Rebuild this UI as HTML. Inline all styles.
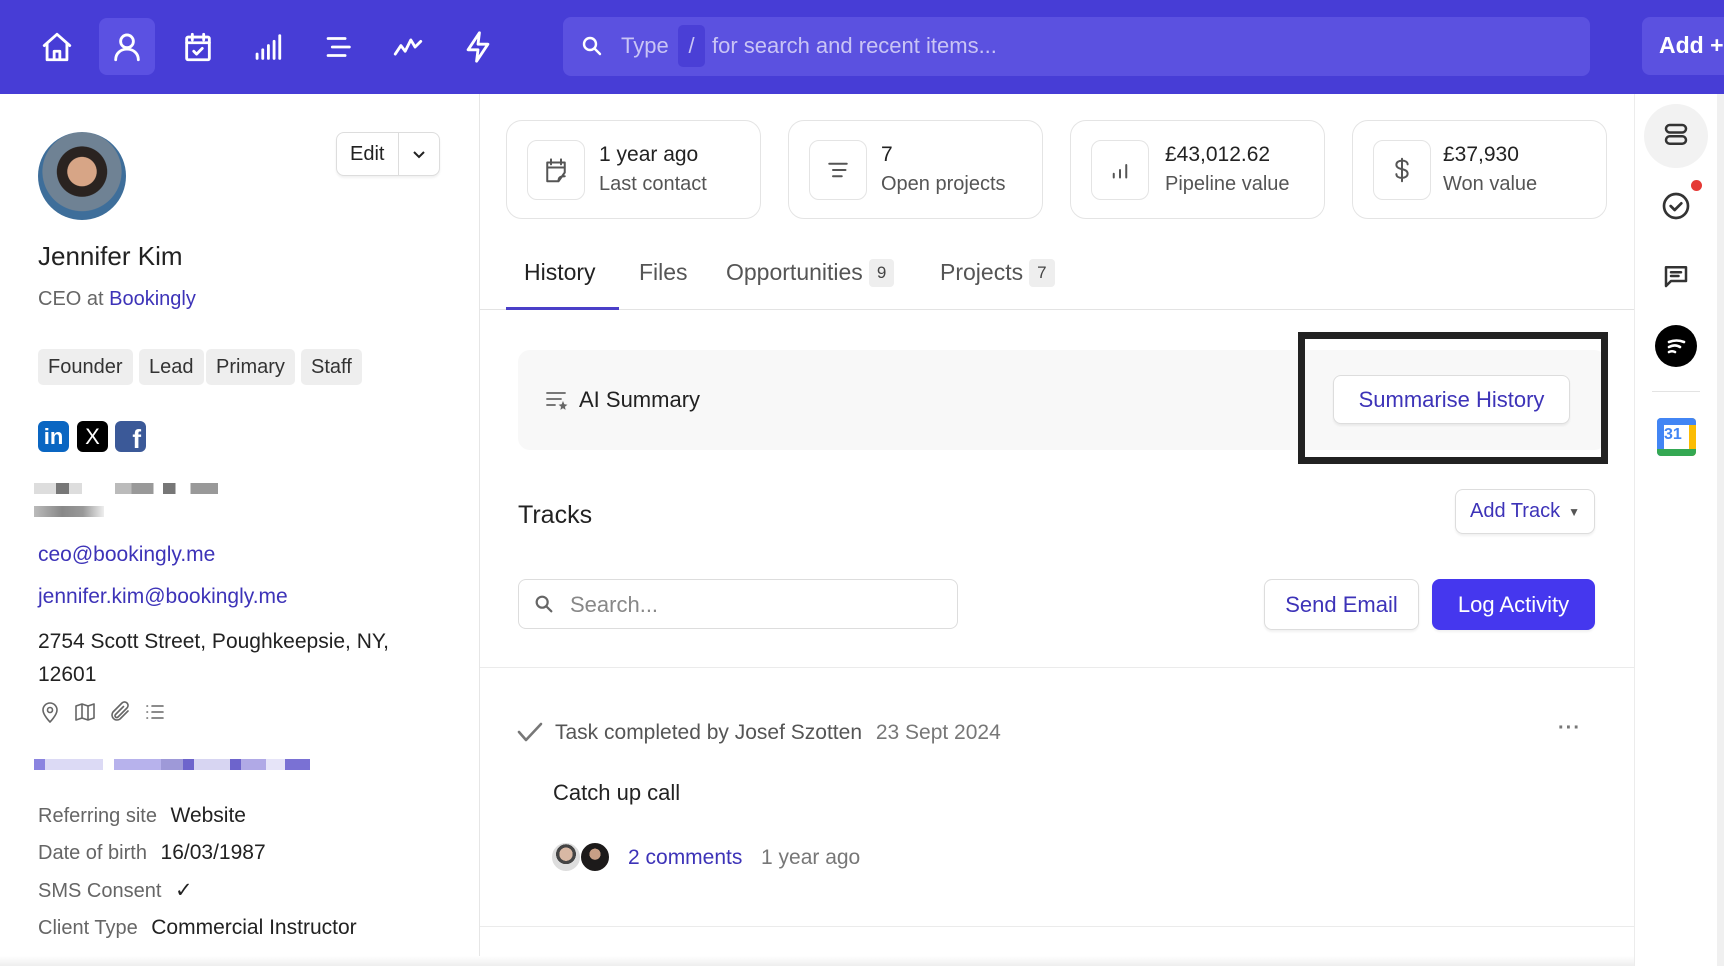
<!DOCTYPE html>
<html><head><meta charset="utf-8"><style>
*{box-sizing:border-box;margin:0;padding:0}
body{width:1724px;height:966px;overflow:hidden;background:#fff;font-family:"Liberation Sans",Arial,sans-serif;color:#222;position:relative}
.a{position:absolute}
.top{left:0;top:0;width:1724px;height:94px;background:#473dd6}
.nav{top:18px;width:56px;height:57px;display:flex;align-items:center;justify-content:center;border-radius:8px}
.nav svg{width:34px;height:34px;fill:none;stroke:#fff;stroke-width:2;stroke-linecap:round;stroke-linejoin:round}
.t{white-space:nowrap}
.tag{top:349px;height:36px;background:#eee;border-radius:5px;font-size:20px;line-height:36px;padding:0 10px;color:#333}
.card{top:120px;width:255px;height:99px;border:1px solid #e4e4e4;border-radius:16px}
.ib{left:20px;top:19px;width:58px;height:60px;border:1px solid #e4e4e4;border-radius:10px;display:flex;align-items:center;justify-content:center}
.ib svg{width:30px;height:30px;fill:none;stroke:#555;stroke-width:1.6;stroke-linecap:round;stroke-linejoin:round}
.v{left:92px;top:22px;font-size:21px;color:#222}
.l{left:92px;top:52px;font-size:20px;color:#555}
.tab{top:259px;font-size:23px;color:#555}
.badge{display:inline-block;background:#eee;border-radius:4px;font-size:17px;padding:4px 8px;margin-left:6px;vertical-align:2px;color:#444}
.btn{border:1px solid #ddd;border-radius:8px;background:#fff;box-shadow:0 2px 2px rgba(0,0,0,.06);display:flex;align-items:center;justify-content:center;color:#3d33b8}
.lbl{font-size:20px;color:#666;left:38px}
.lbl b{font-weight:normal;color:#222;margin-left:8px;font-size:21px}
svg.si,.si svg{fill:none;stroke:#333;stroke-width:2;stroke-linecap:round;stroke-linejoin:round}
</style></head><body>
<div class="a top"></div>
<div class="a nav" style="left:29px"><svg viewBox="0 0 24 24"><path d="M3 11 12 3l9 8M5 9.5V21h14V9.5M10 21v-6h4v6"/></svg></div>
<div class="a nav" style="left:99px;background:#5b51e2"><svg viewBox="0 0 24 24"><circle cx="12" cy="8" r="4.5"/><path d="M4 21c0-4.5 3.5-7.5 8-7.5s8 3 8 7.5"/></svg></div>
<div class="a nav" style="left:170px"><svg viewBox="0 0 24 24"><rect x="4" y="5" width="16" height="16" rx="1"/><path d="M4 9h16M8 3v4M16 3v4M9 15l2 2 4-4"/></svg></div>
<div class="a nav" style="left:239px"><svg viewBox="0 0 24 24"><path d="M5 20v-3M9 20v-6M13 20v-9M17 20V8M21 20V4"/></svg></div>
<div class="a nav" style="left:310px"><svg viewBox="0 0 24 24"><path d="M5 6h12M8 12h12M5 18h12"/></svg></div>
<div class="a nav" style="left:380px"><svg viewBox="0 0 24 24"><path d="M3 17l4-6 3 4 4-8 3 5 4-4"/></svg></div>
<div class="a nav" style="left:450px"><svg viewBox="0 0 24 24"><path d="M13 2 5 14h7l-1 8 8-12h-7z"/></svg></div>
<div class="a" style="left:563px;top:17px;width:1027px;height:59px;background:#5b51e0;border-radius:8px"></div>
<svg class="a" style="left:580px;top:34px" width="24" height="24" viewBox="0 0 24 24" fill="none" stroke="#fff" stroke-width="2.4" stroke-linecap="round"><circle cx="10" cy="10" r="6"/><path d="M15 15l5 5"/></svg>
<div class="a t" style="left:621px;top:33px;font-size:22px;color:#c9c4f5">Type</div>
<div class="a" style="left:678px;top:25px;width:27px;height:42px;background:#4a3fd6;border-radius:5px;color:#c9c4f5;font-size:22px;text-align:center;line-height:42px">/</div>
<div class="a t" style="left:712px;top:33px;font-size:22px;color:#c9c4f5">for search and recent items...</div>
<div class="a" style="left:1642px;top:17px;width:100px;height:58px;background:#5b51e0;border-radius:8px"></div>
<div class="a t" style="left:1659px;top:32px;font-size:23px;color:#fff;font-weight:bold">Add +</div>

<!-- left panel -->
<div class="a" style="left:479px;top:94px;width:1px;height:872px;background:#e6e6e6"></div>
<div class="a" style="left:38px;top:132px;width:88px;height:88px;border-radius:50%;background:radial-gradient(circle at 50% 45%,#d7a586 0 22%,#2a2320 23% 38%,#6f8294 39% 60%,#3e6e9a 61%)"></div>
<div class="a btn" style="left:336px;top:132px;width:104px;height:44px;color:#222;font-size:20px;justify-content:flex-start"><span style="padding-left:13px;width:62px;border-right:1px solid #ddd;line-height:44px">Edit</span><svg style="margin-left:12px" width="16" height="16" viewBox="0 0 16 16" fill="none" stroke="#222" stroke-width="2"><path d="M3 6l5 5 5-5"/></svg></div>
<div class="a t" style="left:38px;top:241px;font-size:26px">Jennifer Kim</div>
<div class="a t" style="left:38px;top:288px;font-size:20px;color:#666">CEO at <span style="color:#3d33b8">Bookingly</span></div>
<div class="a tag" style="left:38px">Founder</div>
<div class="a tag" style="left:139px">Lead</div>
<div class="a tag" style="left:206px">Primary</div>
<div class="a tag" style="left:301px">Staff</div>
<div class="a" style="left:38px;top:421px;width:31px;height:31px;background:#0a66c2;border-radius:6px;color:#fff;font-weight:bold;font-size:22px;line-height:31px;text-align:center">in</div>
<div class="a" style="left:77px;top:421px;width:31px;height:31px;background:#000;border-radius:6px;color:#fff;font-size:22px;line-height:31px;text-align:center">X</div>
<div class="a" style="left:115px;top:421px;width:31px;height:31px;background:#3b5998;border-radius:6px;color:#fff;font-weight:bold;font-size:26px;line-height:36px;text-align:right;padding-right:5px;overflow:hidden">f</div>
<div class="a" style="left:34px;top:483px;width:184px;height:11px;background:linear-gradient(90deg,#ddd 0 12%,#777 12% 19%,#ddd 19% 26%,#fff 26% 44%,#bbb 44% 53%,#999 53% 65%,#fff 65% 70%,#777 70% 77%,#fff 77% 85%,#999 85%)"></div>
<div class="a" style="left:34px;top:506px;width:70px;height:11px;background:linear-gradient(90deg,#bbb,#888 40%,#999 70%,#eee)"></div>
<div class="a t" style="left:38px;top:543px;font-size:21px;color:#3d33b8">ceo@bookingly.me</div>
<div class="a t" style="left:38px;top:585px;font-size:21px;color:#3d33b8">jennifer.kim@bookingly.me</div>
<div class="a" style="left:38px;top:625px;font-size:21px;line-height:33px;width:395px">2754 Scott Street, Poughkeepsie, NY, 12601</div>
<div class="a si" style="left:38px;top:700px;display:flex;gap:11px">
<svg width="24" height="24" viewBox="0 0 24 24" style="stroke:#666;stroke-width:1.6"><path d="M12 22s7-7 7-12a7 7 0 0 0-14 0c0 5 7 12 7 12z"/><circle cx="12" cy="10" r="2.5"/></svg>
<svg width="24" height="24" viewBox="0 0 24 24" style="stroke:#666;stroke-width:1.6"><path d="M3 6l6-2 6 2 6-2v14l-6 2-6-2-6 2zM9 4v14M15 6v14"/></svg>
<svg width="24" height="24" viewBox="0 0 24 24" style="stroke:#666;stroke-width:1.6"><path d="M20 11l-8 8a5 5 0 0 1-7-7l9-9a3.3 3.3 0 0 1 5 5l-9 9a1.7 1.7 0 0 1-2.5-2.5l8-8"/></svg>
<svg width="24" height="24" viewBox="0 0 24 24" style="stroke:#666;stroke-width:1.6"><path d="M9 6h11M9 12h11M9 18h11M4 6h.5M4 12h.5M4 18h.5"/></svg>
</div>
<div class="a" style="left:34px;top:759px;width:276px;height:11px;background:linear-gradient(90deg,#8b84e0 0 4%,#dcdaf5 4% 25%,#fff 25% 29%,#b7b2ec 29% 46%,#9e99d8 46% 54%,#6d64cc 54% 58%,#d7d5f2 58% 71%,#6d64cc 71% 75%,#b0a9e6 75% 84%,#e6e4f8 84% 91%,#7a71d4 91%)"></div>
<div class="a t lbl" style="top:804px">Referring site <b>Website</b></div>
<div class="a t lbl" style="top:841px">Date of birth <b>16/03/1987</b></div>
<div class="a t lbl" style="top:878px">SMS Consent <b>✓</b></div>
<div class="a t lbl" style="top:916px">Client Type <b>Commercial Instructor</b></div>

<!-- stat cards -->
<div class="a card" style="left:506px"><div class="a ib"><svg viewBox="0 0 24 24"><path d="M19 14V6H5v15h9zM5 10h14M8 3.5v4M16 3.5v4M14 21c0-3 1-4 5-4"/></svg></div><div class="a v t">1 year ago</div><div class="a l t">Last contact</div></div>
<div class="a card" style="left:788px"><div class="a ib"><svg viewBox="0 0 24 24"><path d="M5 7h14M8 12h10M8 17h7"/></svg></div><div class="a v t">7</div><div class="a l t">Open projects</div></div>
<div class="a card" style="left:1070px"><div class="a ib"><svg viewBox="0 0 24 24"><path d="M7 18v-3M12 18v-6M17 18V8"/></svg></div><div class="a v t" style="left:94px">£43,012.62</div><div class="a l t" style="left:94px">Pipeline value</div></div>
<div class="a card" style="left:1352px"><div class="a ib"><svg viewBox="0 0 24 24"><path d="M12 3v18M16.5 7.5c0-2-2-3-4.5-3s-4.5 1.2-4.5 3.3 2 3 4.5 3.5 4.5 1.5 4.5 3.6-2 3.4-4.5 3.4-4.5-1-4.5-3"/></svg></div><div class="a v t" style="left:90px">£37,930</div><div class="a l t" style="left:90px">Won value</div></div>

<!-- tabs -->
<div class="a tab t" style="left:524px;color:#222">History</div>
<div class="a tab t" style="left:639px">Files</div>
<div class="a tab t" style="left:726px">Opportunities<span class="badge">9</span></div>
<div class="a tab t" style="left:940px">Projects<span class="badge">7</span></div>
<div class="a" style="left:480px;top:309px;width:1154px;height:1px;background:#e3e3e3"></div>
<div class="a" style="left:506px;top:307px;width:113px;height:3px;background:#4a3fc8"></div>

<!-- AI summary -->
<div class="a" style="left:518px;top:350px;width:1088px;height:100px;background:#f8f8f8;border-radius:12px"></div>
<svg class="a" style="left:545px;top:390px" width="24" height="20" viewBox="0 0 24 20" fill="none" stroke="#666" stroke-width="1.8" stroke-linecap="round"><path d="M2 3h18M2 9h14M2 15h8"/><path d="M18 12l1 2.5 2.5.5-2 1.5.5 2.5-2-1.3-2 1.3.5-2.5-2-1.5 2.5-.5z" fill="#666" stroke-width="0.8"/></svg>
<div class="a t" style="left:579px;top:387px;font-size:22px;color:#222">AI Summary</div>
<div class="a" style="left:1298px;top:332px;width:310px;height:132px;border:7px solid #222"></div>
<div class="a btn t" style="left:1333px;top:375px;width:237px;height:49px;font-size:22px">Summarise History</div>

<!-- tracks -->
<div class="a t" style="left:518px;top:501px;font-size:25px">Tracks</div>
<div class="a btn t" style="left:1455px;top:489px;width:140px;height:45px;font-size:20px">Add Track <span style="color:#555;font-size:12px;margin-left:8px">▼</span></div>
<div class="a" style="left:518px;top:579px;width:440px;height:50px;border:1px solid #ddd;border-radius:8px"></div>
<svg class="a" style="left:533px;top:593px" width="22" height="22" viewBox="0 0 24 24" fill="none" stroke="#666" stroke-width="2.4" stroke-linecap="round"><circle cx="10" cy="10" r="6"/><path d="M15 15l5 5"/></svg>
<div class="a t" style="left:570px;top:592px;font-size:22px;color:#888">Search...</div>
<div class="a btn t" style="left:1264px;top:579px;width:155px;height:51px;font-size:22px">Send Email</div>
<div class="a btn t" style="left:1432px;top:579px;width:163px;height:51px;font-size:22px;background:#4537ee;border-color:#4537ee;color:#fff">Log Activity</div>
<div class="a" style="left:480px;top:667px;width:1154px;height:1px;background:#ebebeb"></div>
<svg class="a" style="left:517px;top:721px" width="26" height="22" viewBox="0 0 26 22" fill="none" stroke="#777" stroke-width="2.6" stroke-linecap="round" stroke-linejoin="round"><path d="M2 11l7 8L24 3"/></svg>
<div class="a t" style="left:555px;top:721px;font-size:21px;color:#555">Task completed by Josef Szotten <span style="margin-left:8px;color:#777">23 Sept 2024</span></div>
<div class="a t" style="left:1558px;top:717px;font-size:20px;color:#777;letter-spacing:1px;font-weight:bold">···</div>
<div class="a t" style="left:553px;top:780px;font-size:22px">Catch up call</div>
<div class="a" style="left:551px;top:842px;width:30px;height:30px;border-radius:50%;background:radial-gradient(circle at 50% 40%,#d8b8a4 0 30%,#444 31% 45%,#ddd 46%);border:1px solid #fff"></div>
<div class="a" style="left:580px;top:842px;width:30px;height:30px;border-radius:50%;background:radial-gradient(circle at 50% 40%,#c89f86 0 25%,#1c1a1a 26%);border:1px solid #fff"></div>
<div class="a t" style="left:628px;top:846px;font-size:21px;color:#3d33b8">2 comments</div>
<div class="a t" style="left:761px;top:846px;font-size:21px;color:#777">1 year ago</div>
<div class="a" style="left:480px;top:926px;width:1154px;height:1px;background:#ebebeb"></div>
<div class="a" style="left:0;top:956px;width:1634px;height:10px;background:linear-gradient(#fff,#eee)"></div>

<!-- right sidebar -->
<div class="a" style="left:1634px;top:94px;width:90px;height:872px;background:#fff;border-left:1px solid #ececec"></div>
<div class="a" style="left:1717px;top:94px;width:7px;height:872px;background:#f0f0f0"></div>
<div class="a" style="left:1644px;top:104px;width:64px;height:64px;border-radius:50%;background:#f2f2f2"></div>
<svg class="a si" style="left:1661px;top:120px" width="30" height="30" viewBox="0 0 24 24"><rect x="4" y="4" width="16" height="6" rx="3"/><rect x="4" y="13" width="16" height="6" rx="3"/></svg>
<svg class="a si" style="left:1660px;top:190px" width="32" height="32" viewBox="0 0 24 24"><circle cx="12" cy="12" r="9"/><path d="M8 12l3 3 5-5"/></svg>
<div class="a" style="left:1691px;top:180px;width:11px;height:11px;border-radius:50%;background:#e53935"></div>
<svg class="a si" style="left:1661px;top:260px" width="30" height="32" viewBox="0 0 24 24"><path d="M4 5h16v11H8l-4 4z"/><path d="M8 9h8M8 12h6"/></svg>
<div class="a" style="left:1655px;top:325px;width:42px;height:42px;border-radius:50%;background:#000"></div>
<svg class="a" style="left:1664px;top:334px" width="24" height="24" viewBox="0 0 24 24" fill="none" stroke="#fff" stroke-width="2.6" stroke-linecap="round"><path d="M5 8c5-2 10-2 15 0M5 13c4-2 8-2 11 0M5 18c2-1 4-1 6 0"/></svg>
<div class="a" style="left:1652px;top:391px;width:48px;height:1px;background:#e3e3e3"></div>
<div class="a" style="left:1657px;top:418px;width:39px;height:38px;border-radius:4px;background:linear-gradient(90deg,#4285f4 0 18%,#fff 18% 82%,#fbbc04 82%);overflow:hidden">
<div style="position:absolute;left:0;top:0;width:39px;height:7px;background:#4285f4"></div>
<div style="position:absolute;left:0;bottom:0;width:39px;height:7px;background:#34a853"></div>
<div style="position:absolute;left:7px;top:8px;font-size:16px;color:#4285f4;font-weight:bold">31</div></div>
</body></html>
